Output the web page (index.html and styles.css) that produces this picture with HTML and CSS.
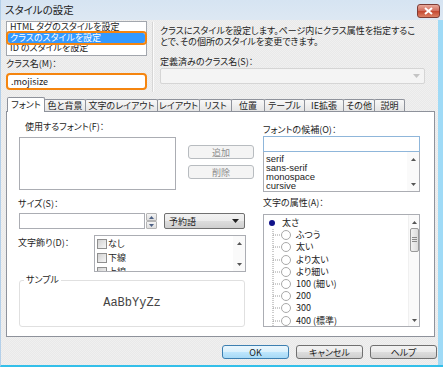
FILE: index.html
```html
<!DOCTYPE html>
<html lang="ja">

<head>
  <meta charset="UTF-8" />
  <title>スタイルの設定</title>
  <link rel="stylesheet" href="styles.css">
</head>

<body>
  <div class="window">
    <div class="titlebar">
      <span class="title">スタイルの設定</span>
      <span class="close">
        <svg width="11" height="8" viewBox="0 0 11 8"><path d="M2 1 L9 7 M9 1 L2 7" stroke="#fff" stroke-width="2" /></svg>
      </span>
    </div>

    <div class="content">
      <div class="top">
        <div class="top-left">
          <ul class="listbox kinds">
            <li>HTML タグのスタイルを設定</li>
            <li class="selected">クラスのスタイルを設定</li>
            <li>ID のスタイルを設定</li>
          </ul>
          <div class="label">クラス名(M)：</div>
          <div class="classname">.mojisize</div>
        </div>
        <div class="vsep"></div>
        <div class="top-right">
          <p class="desc">クラスにスタイルを設定します。ページ内にクラス属性を指定するこ<br>とで、その個所のスタイルを変更できます。</p>
          <div class="label">定義済みのクラス名(S)：</div>
          <div class="combo-disabled">
            <svg width="7" height="4" viewBox="0 0 7 4"><path d="M0 0 H7 L3.5 4 Z" fill="#c4c4c4" /></svg>
          </div>
        </div>
      </div>

      <div class="tabs">
        <span class="tab active">フォント</span>
        <span class="tab">色と背景</span>
        <span class="tab">文字のレイアウト</span>
        <span class="tab">レイアウト</span>
        <span class="tab">リスト</span>
        <span class="tab">位置</span>
        <span class="tab">テーブル</span>
        <span class="tab">IE拡張</span>
        <span class="tab">その他</span>
        <span class="tab">説明</span>
      </div>

      <div class="panel">
        <div class="col-left">
          <div class="label first">使用するフォント(F)：</div>
          <div class="font-row">
            <div class="box font-list"></div>
            <div class="side-buttons">
              <span class="btn disabled">追加</span>
              <span class="btn disabled">削除</span>
            </div>
          </div>

          <div class="label size-label">サイズ(S)：</div>
          <div class="size-row">
            <div class="box size-input"></div>
            <div class="spin">
              <span><svg width="5" height="3" viewBox="0 0 5 3"><path d="M0 3 H5 L2.5 0 Z" fill="#4d6185" /></svg></span>
              <span><svg width="5" height="3" viewBox="0 0 5 3"><path d="M0 0 H5 L2.5 3 Z" fill="#4d6185" /></svg></span>
            </div>
            <div class="dropdown">
              <span>予約語</span>
              <svg width="7" height="4" viewBox="0 0 7 4"><path d="M0 0 H7 L3.5 4 Z" fill="#222" /></svg>
            </div>
          </div>

          <div class="deco-row">
            <div class="label deco-label">文字飾り(D)：</div>
            <div class="box deco-list">
              <ul class="checks">
                <li><span class="check"></span>なし</li>
                <li><span class="check"></span>下線</li>
                <li><span class="check"></span>上線</li>
              </ul>
              <div class="scroll">
                <svg width="5" height="3" viewBox="0 0 5 3"><path d="M0 3 H5 L2.5 0 Z" fill="#555" /></svg>
                <svg width="5" height="3" viewBox="0 0 5 3"><path d="M0 0 H5 L2.5 3 Z" fill="#555" /></svg>
              </div>
            </div>
          </div>

          <fieldset class="sample">
            <legend>サンプル</legend>
            <div class="sample-text">AaBbYyZz</div>
          </fieldset>
        </div>

        <div class="col-right">
          <div class="label cand-label">フォントの候補(O)：</div>
          <div class="cand-input"></div>
          <div class="box cand-list">
            <ul class="plain">
              <li>serif</li>
              <li>sans-serif</li>
              <li>monospace</li>
              <li>cursive</li>
            </ul>
            <div class="scroll">
              <svg width="5" height="3" viewBox="0 0 5 3"><path d="M0 3 H5 L2.5 0 Z" fill="#555" /></svg>
              <svg width="5" height="3" viewBox="0 0 5 3"><path d="M0 0 H5 L2.5 3 Z" fill="#555" /></svg>
            </div>
          </div>

          <div class="label attr-label">文字の属性(A)：</div>
          <div class="box tree">
            <ul class="tree-items">
              <li class="root">
                <svg width="14" height="12" viewBox="0 0 14 12"><circle cx="4" cy="6" r="3" fill="#10128a" /></svg>太さ
              </li>
              <li><svg class="node" width="24" height="12" viewBox="0 0 24 12"><path d="M1 0 V12 M1 6 H9" stroke="#9a9a9a" stroke-dasharray="1 1" /><circle cx="14" cy="6" r="4.5" fill="#fff" stroke="#a9a9a9" /></svg>ふつう</li>
              <li><svg class="node" width="24" height="12" viewBox="0 0 24 12"><path d="M1 0 V12 M1 6 H9" stroke="#9a9a9a" stroke-dasharray="1 1" /><circle cx="14" cy="6" r="4.5" fill="#fff" stroke="#a9a9a9" /></svg>太い</li>
              <li><svg class="node" width="24" height="12" viewBox="0 0 24 12"><path d="M1 0 V12 M1 6 H9" stroke="#9a9a9a" stroke-dasharray="1 1" /><circle cx="14" cy="6" r="4.5" fill="#fff" stroke="#a9a9a9" /></svg>より太い</li>
              <li><svg class="node" width="24" height="12" viewBox="0 0 24 12"><path d="M1 0 V12 M1 6 H9" stroke="#9a9a9a" stroke-dasharray="1 1" /><circle cx="14" cy="6" r="4.5" fill="#fff" stroke="#a9a9a9" /></svg>より細い</li>
              <li><svg class="node" width="24" height="12" viewBox="0 0 24 12"><path d="M1 0 V12 M1 6 H9" stroke="#9a9a9a" stroke-dasharray="1 1" /><circle cx="14" cy="6" r="4.5" fill="#fff" stroke="#a9a9a9" /></svg>100 (細い)</li>
              <li><svg class="node" width="24" height="12" viewBox="0 0 24 12"><path d="M1 0 V12 M1 6 H9" stroke="#9a9a9a" stroke-dasharray="1 1" /><circle cx="14" cy="6" r="4.5" fill="#fff" stroke="#a9a9a9" /></svg>200</li>
              <li><svg class="node" width="24" height="12" viewBox="0 0 24 12"><path d="M1 0 V12 M1 6 H9" stroke="#9a9a9a" stroke-dasharray="1 1" /><circle cx="14" cy="6" r="4.5" fill="#fff" stroke="#a9a9a9" /></svg>300</li>
              <li><svg class="node" width="24" height="12" viewBox="0 0 24 12"><path d="M1 0 V12 M1 6 H9" stroke="#9a9a9a" stroke-dasharray="1 1" /><circle cx="14" cy="6" r="4.5" fill="#fff" stroke="#a9a9a9" /></svg>400 (標準)</li>
            </ul>
            <div class="scroll tree-scroll">
              <svg width="5" height="3" viewBox="0 0 5 3"><path d="M0 3 H5 L2.5 0 Z" fill="#555" /></svg>
              <span class="thumb"><svg width="5" height="6" viewBox="0 0 5 6"><path d="M0 0.5 H5 M0 2.5 H5 M0 4.5 H5" stroke="#8a8a8a" /></svg></span>
              <span class="fill"></span>
              <svg width="5" height="3" viewBox="0 0 5 3"><path d="M0 0 H5 L2.5 3 Z" fill="#555" /></svg>
            </div>
          </div>
        </div>
      </div>

      <div class="footer">
        <span class="btn default">OK</span>
        <span class="btn">キャンセル</span>
        <span class="btn">ヘルプ</span>
      </div>
    </div>
  </div>
</body>

</html>
```

FILE: styles.css
```css
* {
  box-sizing: border-box;
}

html,
body {
  margin: 0;
  padding: 0;
}

body {
  width: 443px;
  height: 367px;
  overflow: hidden;
  font-family: "Noto Sans CJK JP", sans-serif;
  font-size: 9px;
  font-feature-settings: "palt";
  color: #1c1c1c;
}

ul {
  list-style: none;
  margin: 0;
  padding: 0;
}

.window {
  width: 443px;
  height: 367px;
  display: flex;
  flex-direction: column;
  background-color: #ededed;
  background-image: repeating-conic-gradient(#f0f0f0 0 25%, #e9e9e9 0 50%);
  background-size: 2px 2px;
  border-left: 1px solid #b3cfe9;
  border-bottom: 2px solid #33bfe9;
}

/* title bar */
.titlebar {
  height: 20px;
  flex-shrink: 0;
  display: flex;
  align-items: center;
  justify-content: space-between;
  padding: 0 3px 0 4px;
  background: linear-gradient(#d6e4f2, #dde8f3);
}

.title {
  font-size: 10.5px;
  line-height: 14px;
  color: #222;
}

.close {
  width: 23px;
  height: 14px;
  margin-top: 1px;
  display: flex;
  align-items: center;
  justify-content: center;
  border: 1px solid #7d3c35;
  border-radius: 3px;
  background: linear-gradient(#e9a99a, #d06c5c 50%, #c3462f 51%, #dc8064);
}

.content {
  flex: 1;
  padding: 0 0 0 5px;
  border-right: 5px solid #9fdaf6;
}

/* top section */
.top {
  height: 76px;
  display: flex;
}

.top-left {
  width: 141px;
  padding-top: 1px;
}

.listbox {
  background: #fff;
  border: 1px solid #a2a6ad;
  padding: 0 1px 1px;
}

.kinds li {
  height: 10.5px;
  line-height: 10.5px;
  padding-left: 2px;
  white-space: nowrap;
}

.kinds li.selected {
  background: #3399ff;
  color: #fff;
  outline: 2px solid #f5850f;
  border-radius: 2px;
}

.label {
  height: 12px;
  line-height: 12px;
  white-space: nowrap;
}

.top-left .label {
  margin-top: 2px;
}

.classname {
  margin-top: 3px;
  height: 17px;
  line-height: 13px;
  padding-left: 3px;
  background: #fff;
  border: 2px solid #f5850f;
  border-radius: 4px;
}

.vsep {
  width: 2px;
  margin: 2px 6px 0 5px;
  height: 70px;
  border-left: 1px solid #d6d6d6;
  border-right: 1px solid #fbfbfb;
}

.top-right {
  width: 265px;
}

.desc {
  margin: 5px 0 0;
  line-height: 11px;
  white-space: nowrap;
}

.top-right .label {
  margin-top: 9px;
}

.combo-disabled {
  height: 16px;
  background: #f4f4f4;
  border: 1px solid #d5d5d5;
  border-radius: 2px;
  display: flex;
  justify-content: flex-end;
  align-items: center;
  padding-right: 4px;
}

/* tabs */
.tabs {
  display: flex;
  align-items: flex-end;
  height: 15px;
  padding-left: 1px;
}

.tab {
  height: 12px;
  line-height: 11px;
  text-align: center;
  margin-left: -1px;
  border: 1px solid #8e929b;
  border-bottom: none;
  border-radius: 2px 2px 0 0;
  background: linear-gradient(#f8f8f8, #e5e5e5);
  white-space: nowrap;
}

.tab.active {
  height: 15px;
  line-height: 13px;
  margin-bottom: -1px;
  background: #fff;
  position: relative;
  z-index: 1;
}

.tab:nth-child(1) { width: 38px; margin-left: 0; }
.tab:nth-child(2) { width: 42px; }
.tab:nth-child(3) { width: 73px; }
.tab:nth-child(4) { width: 43px; }
.tab:nth-child(5) { width: 33px; }
.tab:nth-child(6) { width: 34px; }
.tab:nth-child(7) { width: 41px; }
.tab:nth-child(8) { width: 40px; }
.tab:nth-child(9) { width: 32px; }
.tab:nth-child(10) { width: 31px; }

/* panel */
.panel {
  width: 429px;
  height: 226px;
  background: #fff;
  border: 1px solid #8e929b;
  display: flex;
  padding: 0 14px 0 11px;
}

.col-left {
  width: 236px;
}

.col-right {
  width: 157px;
  margin-left: 9px;
}

.box {
  background: #fff;
  border: 1px solid #abadb3;
}

.label.first {
  margin: 9px 0 0 7px;
}

.font-row {
  display: flex;
  margin-top: 4px;
}

.font-list {
  width: 157px;
  height: 53px;
  margin-left: 1px;
}

.side-buttons {
  display: flex;
  flex-direction: column;
  gap: 6px;
  margin: 8px 0 0 12px;
}

.btn {
  display: flex;
  align-items: center;
  justify-content: center;
  width: 66px;
  height: 14px;
  border: 1px solid #707070;
  border-radius: 3px;
  background: linear-gradient(#f2f2f2, #ebebeb 50%, #dddddd 51%, #cfcfcf);
  color: #1c1c1c;
}

.btn.disabled {
  border-color: #b8bcc0;
  background: #f4f4f4;
  color: #8c8c8c;
}

.size-label {
  margin-top: 8px;
}

.size-row {
  display: flex;
  margin-top: 3px;
  height: 16px;
}

.size-input {
  width: 126px;
  margin-left: 1px;
}

.spin {
  width: 11px;
  display: flex;
  flex-direction: column;
  margin-left: 1px;
}

.spin span {
  flex: 1;
  display: flex;
  align-items: center;
  justify-content: center;
  border: 1px solid #b4b4b4;
  border-radius: 1px;
  background: linear-gradient(#f4f4f4, #dedede);
}

.dropdown {
  width: 81px;
  margin-left: 7px;
  display: flex;
  align-items: center;
  justify-content: space-between;
  padding: 0 5px 0 4px;
  border: 1px solid #707070;
  border-radius: 2px;
  background: linear-gradient(#f2f2f2, #ebebeb 50%, #dddddd 51%, #cfcfcf);
}

.deco-row {
  display: flex;
  margin-top: 6px;
}

.deco-label {
  width: 76px;
  margin-top: 2px;
}

.deco-list {
  width: 152px;
  height: 37px;
  display: flex;
  overflow: hidden;
}

.checks {
  flex: 1;
  padding: 1px 0 0 2px;
}

.checks li {
  height: 14px;
  line-height: 14px;
  display: flex;
  align-items: center;
}

.check {
  width: 10px;
  height: 10px;
  margin-right: 1px;
  border: 1px solid #8f8f8f;
  background: linear-gradient(135deg, #d2d2d2, #f6f6f6);
}

.scroll {
  width: 12px;
  display: flex;
  flex-direction: column;
  justify-content: space-between;
  align-items: center;
  padding: 6px 0 5px;
  background: #fafafa;
}

.sample {
  margin: 2px 0 0 1px;
  padding: 0;
  width: 226px;
  height: 53px;
  border: 1px solid #e0e0e0;
  border-radius: 3px;
  min-inline-size: 0;
}

.sample legend {
  margin-left: 4px;
  padding: 0 2px;
  line-height: 12px;
}

.sample-text {
  text-align: center;
  margin-top: 10px;
  font-family: "Liberation Mono", monospace;
  font-size: 12px;
  line-height: 14px;
  color: #444;
}

/* right column */
.cand-label {
  margin-top: 12px;
}

.cand-input {
  height: 16px;
  border: 1px solid #8fb6da;
  background: #fff;
}

.cand-list {
  height: 40px;
  display: flex;
  border-top: none;
}

.plain {
  flex: 1;
  padding: 2px 0 0 2px;
  font-family: "Liberation Sans", sans-serif;
  font-size: 9.5px;
  font-feature-settings: normal;
}

.plain li {
  height: 9px;
  line-height: 9px;
}

.attr-label {
  margin-top: 5px;
}

.tree {
  height: 113px;
  margin-top: 5px;
  display: flex;
  overflow: hidden;
}

.tree-items {
  flex: 1;
  padding: 2px 0 0 8px;
}

.tree-items li {
  height: 12.2px;
  line-height: 12px;
  display: flex;
  align-items: center;
  white-space: nowrap;
}

.tree-items li.root svg {
  margin-left: -4px;
}

.tree-items .node {
  flex-shrink: 0;
}

.tree-scroll {
  width: 11px;
  padding: 6px 0 4px;
  justify-content: flex-start;
  border-left: 1px solid #f0f0f0;
}

.tree-scroll .thumb {
  margin-top: 4px;
  width: 9px;
  height: 24px;
  display: flex;
  align-items: center;
  justify-content: center;
  border: 1px solid #9a9a9a;
  border-radius: 2px;
  background: linear-gradient(90deg, #f2f2f2, #dcdcdc);
}

.tree-scroll .fill {
  flex: 1;
}

/* footer */
.footer {
  display: flex;
  gap: 7px;
  margin-top: 8px;
  padding-left: 216px;
}

.footer .btn {
  width: 67px;
}

.btn.default {
  border-color: #3c7fb1;
  background: linear-gradient(#eaf6fd, #d9f0fc 50%, #bee6fd 51%, #a7d9f5);
}
```
